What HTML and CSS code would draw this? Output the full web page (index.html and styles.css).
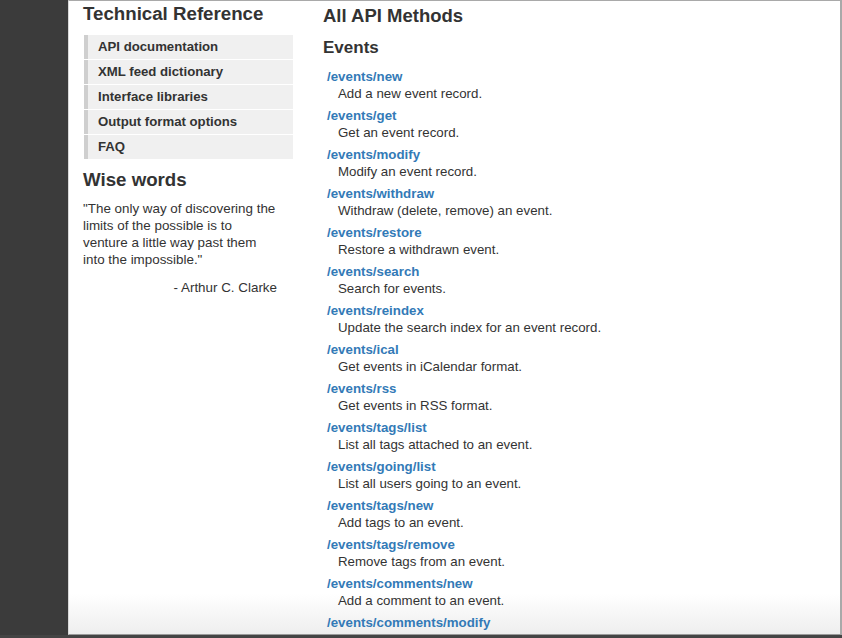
FILE: index.html
```html
<!DOCTYPE html>
<html>
<head>
<meta charset="utf-8">
<link rel="stylesheet" href="styles.css">
</head>
<body>
<div class="window">
  <div class="rail"></div>
  <div class="page">
    <div class="layout">
      <aside class="sidebar">
        <h2 class="side-title">Technical Reference</h2>
        <ul class="nav">
          <li>API documentation</li>
          <li>XML feed dictionary</li>
          <li>Interface libraries</li>
          <li>Output format options</li>
          <li>FAQ</li>
        </ul>
        <h2 class="side-title wise">Wise words</h2>
        <p class="quote">"The only way of discovering the limits of the possible is to venture a little way past them into the impossible."</p>
        <p class="author">- Arthur C. Clarke</p>
      </aside>
      <main class="main">
        <h1 class="main-title">All API Methods</h1>
        <h2 class="section-title">Events</h2>
        <dl class="methods">
          <dt>/events/new</dt><dd>Add a new event record.</dd>
          <dt>/events/get</dt><dd>Get an event record.</dd>
          <dt>/events/modify</dt><dd>Modify an event record.</dd>
          <dt>/events/withdraw</dt><dd>Withdraw (delete, remove) an event.</dd>
          <dt>/events/restore</dt><dd>Restore a withdrawn event.</dd>
          <dt>/events/search</dt><dd>Search for events.</dd>
          <dt>/events/reindex</dt><dd>Update the search index for an event record.</dd>
          <dt>/events/ical</dt><dd>Get events in iCalendar format.</dd>
          <dt>/events/rss</dt><dd>Get events in RSS format.</dd>
          <dt>/events/tags/list</dt><dd>List all tags attached to an event.</dd>
          <dt>/events/going/list</dt><dd>List all users going to an event.</dd>
          <dt>/events/tags/new</dt><dd>Add tags to an event.</dd>
          <dt>/events/tags/remove</dt><dd>Remove tags from an event.</dd>
          <dt>/events/comments/new</dt><dd>Add a comment to an event.</dd>
          <dt>/events/comments/modify</dt><dd>Make changes to an existing comment on an event.</dd>
        </dl>
      </main>
    </div>
  </div>
</div>
</body>
</html>
```
FILE: styles.css
```css
html, body {
  margin: 0;
  padding: 0;
  height: 100%;
  overflow: hidden;
  background: #3c3c3c;
}
body {
  font-family: "Liberation Sans", Arial, sans-serif;
  color: #333;
}
.window {
  display: grid;
  grid-template-columns: 68px 1fr;
  height: 635px;
  border-bottom: 3px solid #444;
}
.rail {
  background: #3b3b3b;
}
.page {
  background: linear-gradient(to bottom, #fff calc(100% - 40px), #eeeeee);
  border-top: 1px solid #a9a9a9;
  border-left: 1px solid #d8d8d8;
  border-right: 2px solid #a9a9a9;
  border-bottom: 1px solid #9a9a9a;
  overflow: hidden;
}
.layout {
  display: flex;
  gap: 30px;
  padding-left: 14px;
}
.sidebar {
  width: 210px;
  flex: none;
}
.side-title {
  margin: 0;
  font-size: 18.7px;
  line-height: 26px;
  font-weight: bold;
  color: #333;
}
.nav {
  list-style: none;
  margin: 8px 0 0 1px;
  padding: 0;
  display: flex;
  flex-direction: column;
  gap: 1px;
}
.nav li {
  height: 24px;
  line-height: 24px;
  background: #f0f0f0;
  border-left: 4px solid #cfcfcf;
  padding-left: 10px;
  font-size: 13.2px;
  font-weight: bold;
  color: #333;
}
.wise {
  margin-top: 8px;
}
.quote {
  margin: 7px 0 0;
  font-size: 13.4px;
  line-height: 17px;
  color: #333;
  width: 196px;
}
.author {
  margin: 11px 0 0;
  text-align: right;
  font-size: 13.4px;
  line-height: 17px;
  padding-right: 16px;
}
.main {
  flex: 1;
}
.main-title {
  margin: 2px 0 0;
  font-size: 18.5px;
  line-height: 26px;
  font-weight: bold;
}
.section-title {
  margin: 7px 0 0;
  font-size: 17px;
  line-height: 24px;
  font-weight: bold;
}
.methods {
  margin: 8px 0 0 4px;
}
.methods dt {
  font-size: 13.3px;
  line-height: 17px;
  font-weight: bold;
  color: #337ab7;
}
.methods dd {
  margin: 0 0 5px 11px;
  font-size: 13.3px;
  line-height: 17px;
  color: #333;
}
```
